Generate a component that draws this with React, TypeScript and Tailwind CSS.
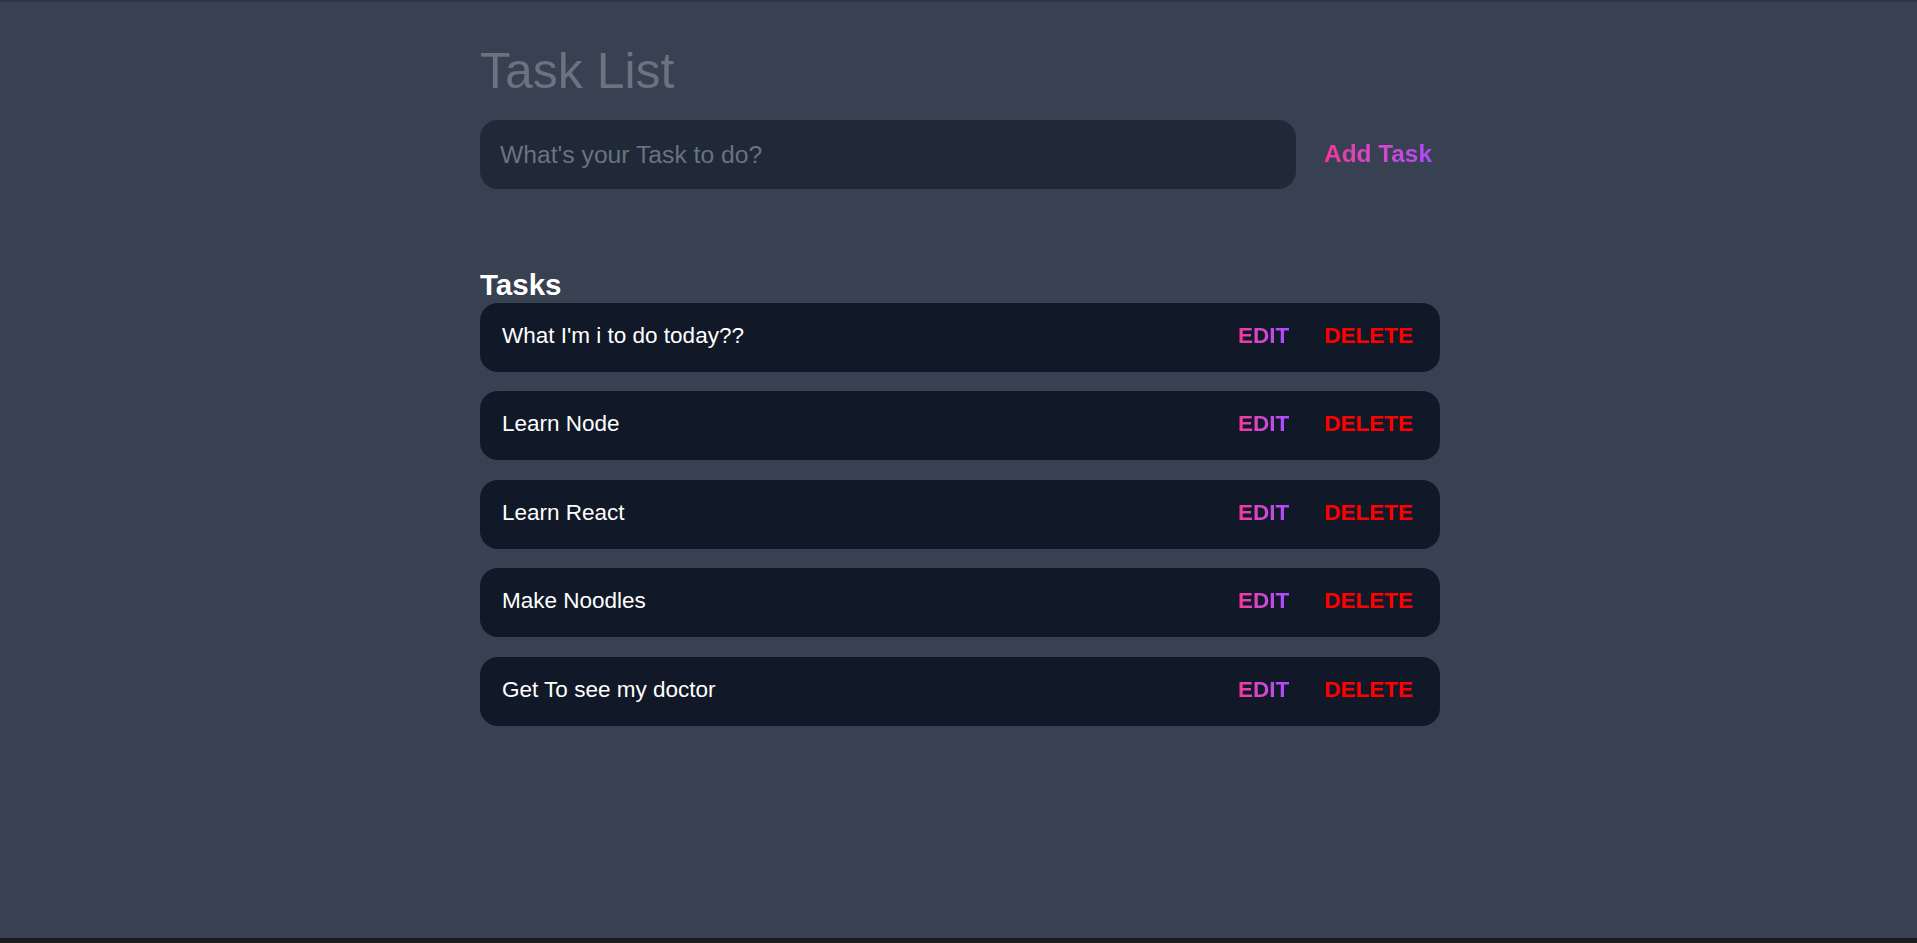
import { useState } from "react";

const INITIAL_TASKS = [
  "What I'm i to do today??",
  "Learn Node",
  "Learn React",
  "Make Noodles",
  "Get To see my doctor",
];

export default function App() {
  const [tasks, setTasks] = useState(INITIAL_TASKS);
  const [draft, setDraft] = useState("");

  function addTask() {
    const text = draft.trim();
    if (!text) return;
    setTasks([...tasks, text]);
    setDraft("");
  }

  function removeTask(index: number) {
    setTasks(tasks.filter((_, i) => i !== index));
  }

  return (
    <div className="h-screen flex flex-col font-['Liberation_Sans',Arial,sans-serif]">
      <div className="h-[2px] bg-[#2e3440]" />
      <main className="flex-1 bg-[#374151] flex justify-center">
        <div className="w-[963px] pl-[3px] pt-[44px]">
          <h1 className="text-[50px] leading-none text-[#6b7280]">Task List</h1>

          <div className="mt-6 flex items-center gap-[28px]">
            <input
              value={draft}
              onChange={(e) => setDraft(e.target.value)}
              placeholder="What's your Task to do?"
              className="flex-1 h-[69px] rounded-[18px] bg-[#1f2937] px-5 text-[24.7px] text-gray-100 placeholder:text-[#6b7280] outline-none"
            />
            <button
              type="button"
              onClick={addTask}
              className="pr-2 text-[24.4px] font-bold bg-gradient-to-r from-pink-500 to-purple-500 bg-clip-text text-transparent"
            >
              Add Task
            </button>
          </div>

          <h2 className="mt-[81px] text-[29.5px] leading-none font-bold text-white">Tasks</h2>

          <ul className="mt-[3px] flex flex-col gap-[19.5px]">
            {tasks.map((task, i) => (
              <li
                key={task + i}
                className="h-[69px] rounded-[18px] bg-[#111827] pl-[22px] pr-[27px] pb-[3px] flex items-center justify-between text-[22.5px]"
              >
                <span className="text-white">{task}</span>
                <div className="flex items-center gap-[35px] font-bold">
                  <button
                    type="button"
                    className="bg-gradient-to-r from-pink-500 to-purple-500 bg-clip-text text-transparent"
                  >
                    EDIT
                  </button>
                  <button
                    type="button"
                    onClick={() => removeTask(i)}
                    className="text-[#ff0000]"
                  >
                    DELETE
                  </button>
                </div>
              </li>
            ))}
          </ul>
        </div>
      </main>
      <div className="h-[5px] bg-[#1c1c1c]" />
    </div>
  );
}
